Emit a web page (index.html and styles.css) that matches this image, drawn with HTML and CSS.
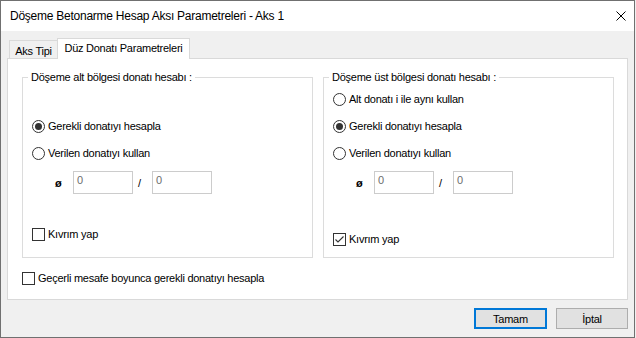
FILE: index.html
```html
<!DOCTYPE html>
<html lang="tr">
<head>
    <meta charset="UTF-8">
    <title>Döşeme Betonarme Hesap Aksı Parametreleri</title>
    <link rel="stylesheet" href="styles.css">
</head>
<body>
    <div class="window">
        <div class="titlebar">
            <span class="title">Döşeme Betonarme Hesap Aksı Parametreleri - Aks 1</span>
            <svg class="close" width="10" height="10" viewBox="0 0 10 10">
                <path d="M0.5 0.5 L9.5 9.5 M9.5 0.5 L0.5 9.5" stroke="#000" stroke-width="1" fill="none"/>
            </svg>
        </div>
        <div class="client">
            <div class="tabs">
                <div class="tab">Aks Tipi</div>
                <div class="tab active">Düz Donatı Parametreleri</div>
            </div>
            <div class="panel">
                <div class="groups">
                    <!-- alt bolge -->
                    <div class="group">
                        <span class="group-title">Döşeme alt bölgesi donatı hesabı :</span>
                        <div class="option lower-first"><span class="radio checked"></span>Gerekli donatıyı hesapla</div>
                        <div class="option next"><span class="radio"></span>Verilen donatıyı kullan</div>
                        <div class="bar-row">
                            <span class="phi">ø</span>
                            <div class="field">0</div>
                            <span class="slash">/</span>
                            <div class="field">0</div>
                        </div>
                        <div class="option lower-check"><span class="check"></span>Kıvrım yap</div>
                    </div>
                    <!-- ust bolge -->
                    <div class="group">
                        <span class="group-title">Döşeme üst bölgesi donatı hesabı :</span>
                        <div class="option upper-first"><span class="radio"></span>Alt donatı i ile aynı kullan</div>
                        <div class="option next"><span class="radio checked"></span>Gerekli donatıyı hesapla</div>
                        <div class="option next"><span class="radio"></span>Verilen donatıyı kullan</div>
                        <div class="bar-row">
                            <span class="phi">ø</span>
                            <div class="field">0</div>
                            <span class="slash">/</span>
                            <div class="field">0</div>
                        </div>
                        <div class="option upper-check">
                            <span class="check">
                                <svg width="11" height="11" viewBox="0 0 11 11">
                                    <polyline points="1.5,5.5 4,8 9.5,2.5" stroke="#333" stroke-width="1.1" fill="none"/>
                                </svg>
                            </span>Kıvrım yap
                        </div>
                    </div>
                </div>
                <div class="option panel-check"><span class="check"></span>Geçerli mesafe boyunca gerekli donatıyı hesapla</div>
            </div>
            <div class="actions">
                <button class="btn default">Tamam</button>
                <button class="btn">İptal</button>
            </div>
        </div>
    </div>
</body>
</html>
```

FILE: styles.css
```css
body {
    margin: 0;
    background: #f0f0f0;
}

/* Dialog window */
.window {
    width: 635px;
    height: 338px;
    box-sizing: border-box;
    border: 1px solid #707070;
    background: #f0f0f0;
    display: flex;
    flex-direction: column;
    font-family: "Liberation Sans", Arial, sans-serif;
    font-size: 11px;
    letter-spacing: -0.25px;
    color: #000;
}

.titlebar {
    flex: none;
    height: 30px;
    background: #fff;
    display: flex;
    align-items: center;
    padding: 0 8px 0 9px;
    font-size: 12px;
}

.close {
    margin-left: auto;
}

.client {
    flex: 1;
    display: flex;
    flex-direction: column;
    padding: 7px 6px 0 6px;
}

/* Tabs */
.tabs {
    display: flex;
    align-items: flex-end;
    height: 21px;
    margin: 0 0 -1px 2px;
    position: relative;
    z-index: 1;
}

.tab {
    width: 48px;
    height: 18px;
    box-sizing: border-box;
    border: 1px solid #d9d9d9;
    border-bottom: none;
    border-right: none;
    background: #f0f0f0;
    margin-bottom: 1px;
    padding-top: 3px;
    line-height: 14px;
    text-align: center;
}

.tab.active {
    width: 133px;
    height: 21px;
    border-right: 1px solid #d9d9d9;
    background: #fff;
    margin-bottom: 0;
    padding-top: 2px;
}

.panel {
    height: 242px;
    box-sizing: border-box;
    border: 1px solid #d9d9d9;
    background: #fff;
    padding-left: 14px;
}

/* Group boxes */
.groups {
    display: flex;
    gap: 10px;
    margin-top: 18px;
}

.group {
    width: 291px;
    height: 181px;
    box-sizing: border-box;
    border: 1px solid #dcdcdc;
    display: flex;
    flex-direction: column;
    align-items: flex-start;
    padding-left: 9px;
}

.group-title {
    background: #fff;
    padding: 0 3px;
    margin: -8px 0 0 -4px;
    line-height: 14px;
}

.option {
    display: flex;
    align-items: center;
    gap: 3px;
    height: 16px;
    white-space: nowrap;
}

.lower-first { margin-top: 34px; }
.upper-first { margin-top: 7px; }
.next { margin-top: 11px; }
.lower-check { margin-top: 32px; }
.upper-check { margin-top: 37px; }
.panel-check { margin-top: 12px; }

.radio {
    width: 13px;
    height: 13px;
    box-sizing: border-box;
    border: 1px solid #333;
    border-radius: 50%;
    background: #fff;
    display: flex;
    align-items: center;
    justify-content: center;
}

.radio.checked::after {
    content: "";
    width: 7px;
    height: 7px;
    border-radius: 50%;
    background: #333;
}

.check {
    width: 13px;
    height: 13px;
    box-sizing: border-box;
    border: 1px solid #333;
    background: #fff;
    display: flex;
}

/* Diameter / spacing inputs */
.bar-row {
    display: flex;
    align-items: center;
    margin-top: 10px;
    padding-left: 23px;
}

.phi {
    width: 18px;
    font-weight: bold;
}

.field {
    width: 60px;
    height: 23px;
    box-sizing: border-box;
    border: 1px solid #ccc;
    background: #fff;
    color: #6d6d6d;
    padding: 1px 0 0 3px;
    line-height: 14px;
}

.slash {
    width: 19px;
    box-sizing: border-box;
    padding-left: 5px;
}

/* Bottom buttons */
.actions {
    display: flex;
    justify-content: flex-end;
    gap: 9px;
    margin-top: 8px;
}

.btn {
    width: 72px;
    height: 21px;
    padding: 0;
    border: 1px solid #adadad;
    background: #e1e1e1;
    font: inherit;
    letter-spacing: inherit;
    color: #000;
}

.btn.default {
    width: 73px;
    border: 2px solid #0078d7;
}
```
